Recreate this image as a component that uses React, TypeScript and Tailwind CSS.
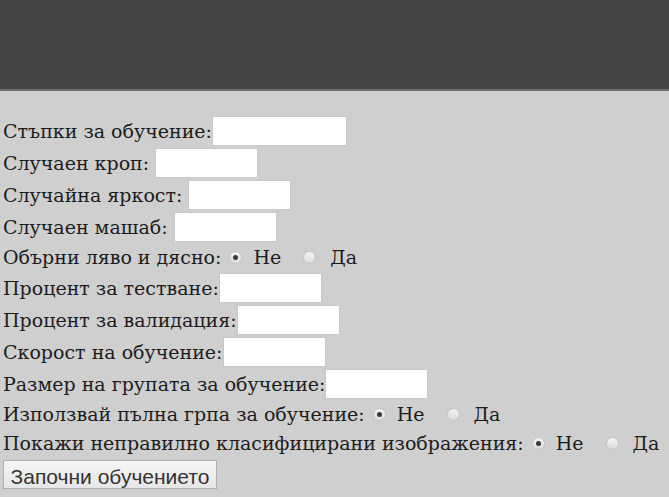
import React from "react";

type Field =
  | { kind: "text"; label: string; gap: string; width: string }
  | { kind: "radio"; label: string };

const fields: Field[] = [
  { kind: "text", label: "Стъпки за обучение:", gap: "ml-0", width: "w-[135px]" },
  { kind: "text", label: "Случаен кроп:", gap: "ml-[6px]", width: "w-[103px]" },
  { kind: "text", label: "Случайна яркост:", gap: "ml-[6px]", width: "w-[103px]" },
  { kind: "text", label: "Случаен машаб:", gap: "ml-[6px]", width: "w-[103px]" },
  { kind: "radio", label: "Обърни ляво и дясно:" },
  { kind: "text", label: "Процент за тестване:", gap: "ml-0", width: "w-[103px]" },
  { kind: "text", label: "Процент за валидация:", gap: "ml-0", width: "w-[103px]" },
  { kind: "text", label: "Скорост на обучение:", gap: "ml-0", width: "w-[103px]" },
  { kind: "text", label: "Размер на групата за обучение:", gap: "ml-0", width: "w-[103px]" },
  { kind: "radio", label: "Използвай пълна грпа за обучение:" },
  { kind: "radio", label: "Покажи неправилно класифицирани изображения:" },
];

function Radio({ checked }: { checked: boolean }) {
  return (
    <span className="flex h-[13px] w-[13px] items-center justify-center rounded-full border border-[#c4c4c4] bg-gradient-to-b from-[#f4f4f4] to-[#dcdcdc]">
      {checked && <span className="h-[5px] w-[5px] rounded-full bg-[#3a3a3a]" />}
    </span>
  );
}

export default function App() {
  return (
    <div className="min-h-[497px] w-[669px] bg-[#cfcfcf] font-['DejaVu_Serif',serif] text-[19px] text-[#1c1c1c]">
      <div className="h-[91px] border-b-2 border-[#6e6e6e] bg-[#444444]" />
      <div className="flex flex-col pl-[3px] pt-[24px]">
        {fields.map((f) =>
          f.kind === "text" ? (
            <div key={f.label} className="flex h-[32px] items-center">
              <span className="leading-none">{f.label}</span>
              <input
                className={`${f.gap} ${f.width} h-[30px] border border-[#c8c8c8] bg-white outline-none`}
              />
            </div>
          ) : (
            <div key={f.label} className="flex h-[29px] items-center">
              <span className="leading-none">{f.label}</span>
              <span className="ml-[8px]">
                <Radio checked />
              </span>
              <span className="ml-[11px] leading-none">Не</span>
              <span className="ml-[22px]">
                <Radio checked={false} />
              </span>
              <span className="ml-[14px] leading-none">Да</span>
            </div>
          )
        )}
        <div className="mt-[2px]">
          <button className="h-[29px] w-[214px] border border-[#adadad] bg-gradient-to-b from-[#f6f6f6] to-[#e6e6e6] font-['Liberation_Sans',sans-serif] text-[21px] text-[#333]">
            Започни обучението
          </button>
        </div>
      </div>
    </div>
  );
}
